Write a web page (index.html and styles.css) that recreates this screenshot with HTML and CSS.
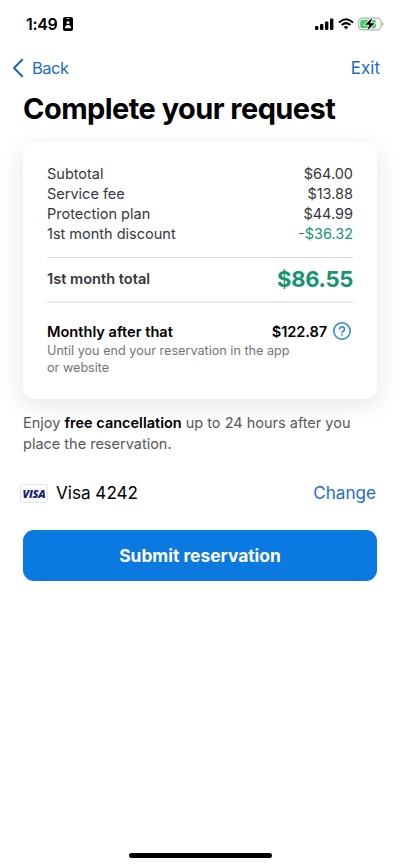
FILE: index.html
```html
<!DOCTYPE html>
<html lang="en">
<head>
<meta charset="utf-8">
<meta name="viewport" content="width=device-width, initial-scale=1">
<title>Complete your request</title>
<link rel="stylesheet" href="styles.css">
</head>
<body>
<div class="screen">
  <div class="status">
    <div class="clock"><span>1:49</span>
      <svg width="10" height="14" viewBox="0 0 10 14"><rect width="10" height="14" rx="2" fill="#000"/><rect x="3.4" y="1.3" width="3.2" height=".8" rx=".4" fill="#fff"/><circle cx="5" cy="5.4" r="1.5" fill="#fff"/><path d="M2 11.2q0-3.2 3-3.2t3 3.2z" fill="#fff"/></svg>
    </div>
    <div class="indicators">
      <svg width="19" height="12" viewBox="0 0 19 12"><rect x="0" y="8" width="3.4" height="4" rx="1"/><rect x="5" y="6" width="3.4" height="6" rx="1"/><rect x="10" y="3.5" width="3.4" height="8.5" rx="1"/><rect x="15" y="0.5" width="3.4" height="11.5" rx="1"/></svg>
      <svg class="wifi" width="16" height="12" viewBox="0 0 16 12"><g fill="none" stroke="#000" stroke-width="2"><path d="M1 4.5Q8-1.9 15 4.5"/><path d="M3.6 7.1Q8 3.2 12.4 7.1"/></g><path d="M5.7 9Q8 7.1 10.3 9L8 11.5z"/></svg>
      <svg width="26" height="14" viewBox="0 0 26 14"><rect x=".6" y="1.1" width="22.3" height="11.8" rx="3.8" fill="#fff" stroke="#b3acb1" stroke-width="1.1"/><rect x="2.2" y="2.7" width="15.8" height="8.6" rx="2.2" fill="#3fd069"/><path d="M24 5v4q1.6-.5 1.6-2T24 5z" fill="#b3acb1"/><path d="M14.5.5 6.9 7.8h4.5L9.1 13.5l7.7-7.3h-4.6z" stroke="#fff" stroke-width="1.6" paint-order="stroke"/></svg>
    </div>
  </div>
  <nav class="nav">
    <a class="back"><svg width="12" height="20" viewBox="0 0 12 20"><path d="M10.2 1.8 2 10l8.2 8.2" fill="none" stroke="#1a6ccb" stroke-width="2.1" stroke-linecap="round" stroke-linejoin="round"/></svg><span>Back</span></a>
    <a class="exit">Exit</a>
  </nav>
  <h1>Complete your request</h1>
  <section class="card">
    <div class="row"><span>Subtotal</span><span>$64.00</span></div>
    <div class="row"><span>Service fee</span><span>$13.88</span></div>
    <div class="row"><span>Protection plan</span><span>$44.99</span></div>
    <div class="row"><span>1st month discount</span><span class="green">-$36.32</span></div>
    <div class="total"><span>1st month total</span><strong>$86.55</strong></div>
    <div class="monthly"><span>Monthly after that</span><span class="price">$122.87</span>
      <svg width="18" height="18" viewBox="0 0 18 18" fill="none" stroke="#2682df" stroke-width="1.5" stroke-linecap="round"><circle cx="9" cy="9" r="8.2"/><path d="M6.6 7.1a2.4 2.4 0 1 1 3.8 2c-1 .65-1.4 1-1.4 1.6"/><circle cx="9" cy="13.1" r=".25"/></svg>
    </div>
    <p class="note">Until you end your reservation in the app<br>or website</p>
  </section>
  <p class="cancel">Enjoy <b>free cancellation</b> up to 24 hours after you<br>place the reservation.</p>
  <div class="payment"><span class="visa">VISA</span><span class="number">Visa 4242</span><a class="change">Change</a></div>
  <button class="submit">Submit reservation</button>
  <div class="home"></div>
</div>
</body>
</html>
```
FILE: styles.css
```css
* { box-sizing: border-box; }
body { margin: 0; background: #fff; font-family: Inter, "Liberation Sans", sans-serif; color: #000; }
.screen { width: 400px; height: 866px; display: flex; flex-direction: column; overflow: hidden; }
.screen svg { display: block; flex: none; }
.status { height: 48px; display: flex; justify-content: space-between; align-items: center; padding: 0 16px 0 26px; }
.clock { display: flex; align-items: center; gap: 5px; font-size: 16px; font-weight: 600; letter-spacing: -0.3px; }
.indicators { display: flex; align-items: center; gap: 4px; }
.nav { height: 40px; display: flex; justify-content: space-between; align-items: center; padding: 0 20px 0 12px; font-size: 16.5px; color: #1a6ccb; }
.back { display: flex; align-items: center; gap: 8px; letter-spacing: -0.5px; }
.exit { font-size: 17px; }
h1 { margin: 2px 0 0 23px; height: 38px; line-height: 38px; font-size: 29px; font-weight: 700; letter-spacing: -0.55px; white-space: nowrap; }
.card { margin: 14px 23px 0; height: 257px; padding: 22px 24px 0; border-radius: 12px; background: #fff; box-shadow: 0 6px 24px rgba(0,0,0,.11); }
.row { height: 19.8px; display: flex; justify-content: space-between; align-items: center; font-size: 14.5px; color: #37373d; }
.row .green { color: #159570; }
.total { height: 46px; margin-top: 13.8px; padding-bottom: 1px; display: flex; justify-content: space-between; align-items: center; border-top: 1px solid #dedede; border-bottom: 2px solid #ececec; font-size: 14.6px; font-weight: 600; color: #37373d; }
.total strong { font-size: 22px; font-weight: 700; letter-spacing: -0.3px; color: #159570; }
.monthly { height: 20px; margin-top: 19px; display: flex; align-items: center; padding-right: 2px; font-size: 14.6px; font-weight: 600; }
.monthly svg { margin-top: -1px; }
.price { margin: 0 6px 0 auto; letter-spacing: -0.1px; }
.note { margin: 0; font-size: 12.65px; line-height: 17.5px; color: #74747b; white-space: nowrap; }
.cancel { margin: 13px 23px 0; font-size: 14.5px; line-height: 21px; color: #58585e; white-space: nowrap; }
.cancel b { font-weight: 600; color: #000; }
.payment { height: 30px; margin: 24px 24px 0 20px; display: flex; align-items: center; font-size: 17.1px; line-height: 20px; }
.visa { width: 28px; height: 19px; border: 1px solid #e0e3e8; border-radius: 2px; display: flex; align-items: center; justify-content: center; font: italic 800 11px "Open Sans", sans-serif; letter-spacing: -0.3px; color: #1c2273; }
.number { margin-left: 8px; }
.change { margin-left: auto; color: #1a6ccb; }
.submit { height: 51px; margin: 22px 23px 0; padding-bottom: 2px; border: 0; border-radius: 11px; background: #0a79e0; color: #fff; font: 700 17.4px Inter, sans-serif; }
.home { width: 143px; height: 5px; margin: auto auto 8px; border-radius: 3px; background: #000; }
```
